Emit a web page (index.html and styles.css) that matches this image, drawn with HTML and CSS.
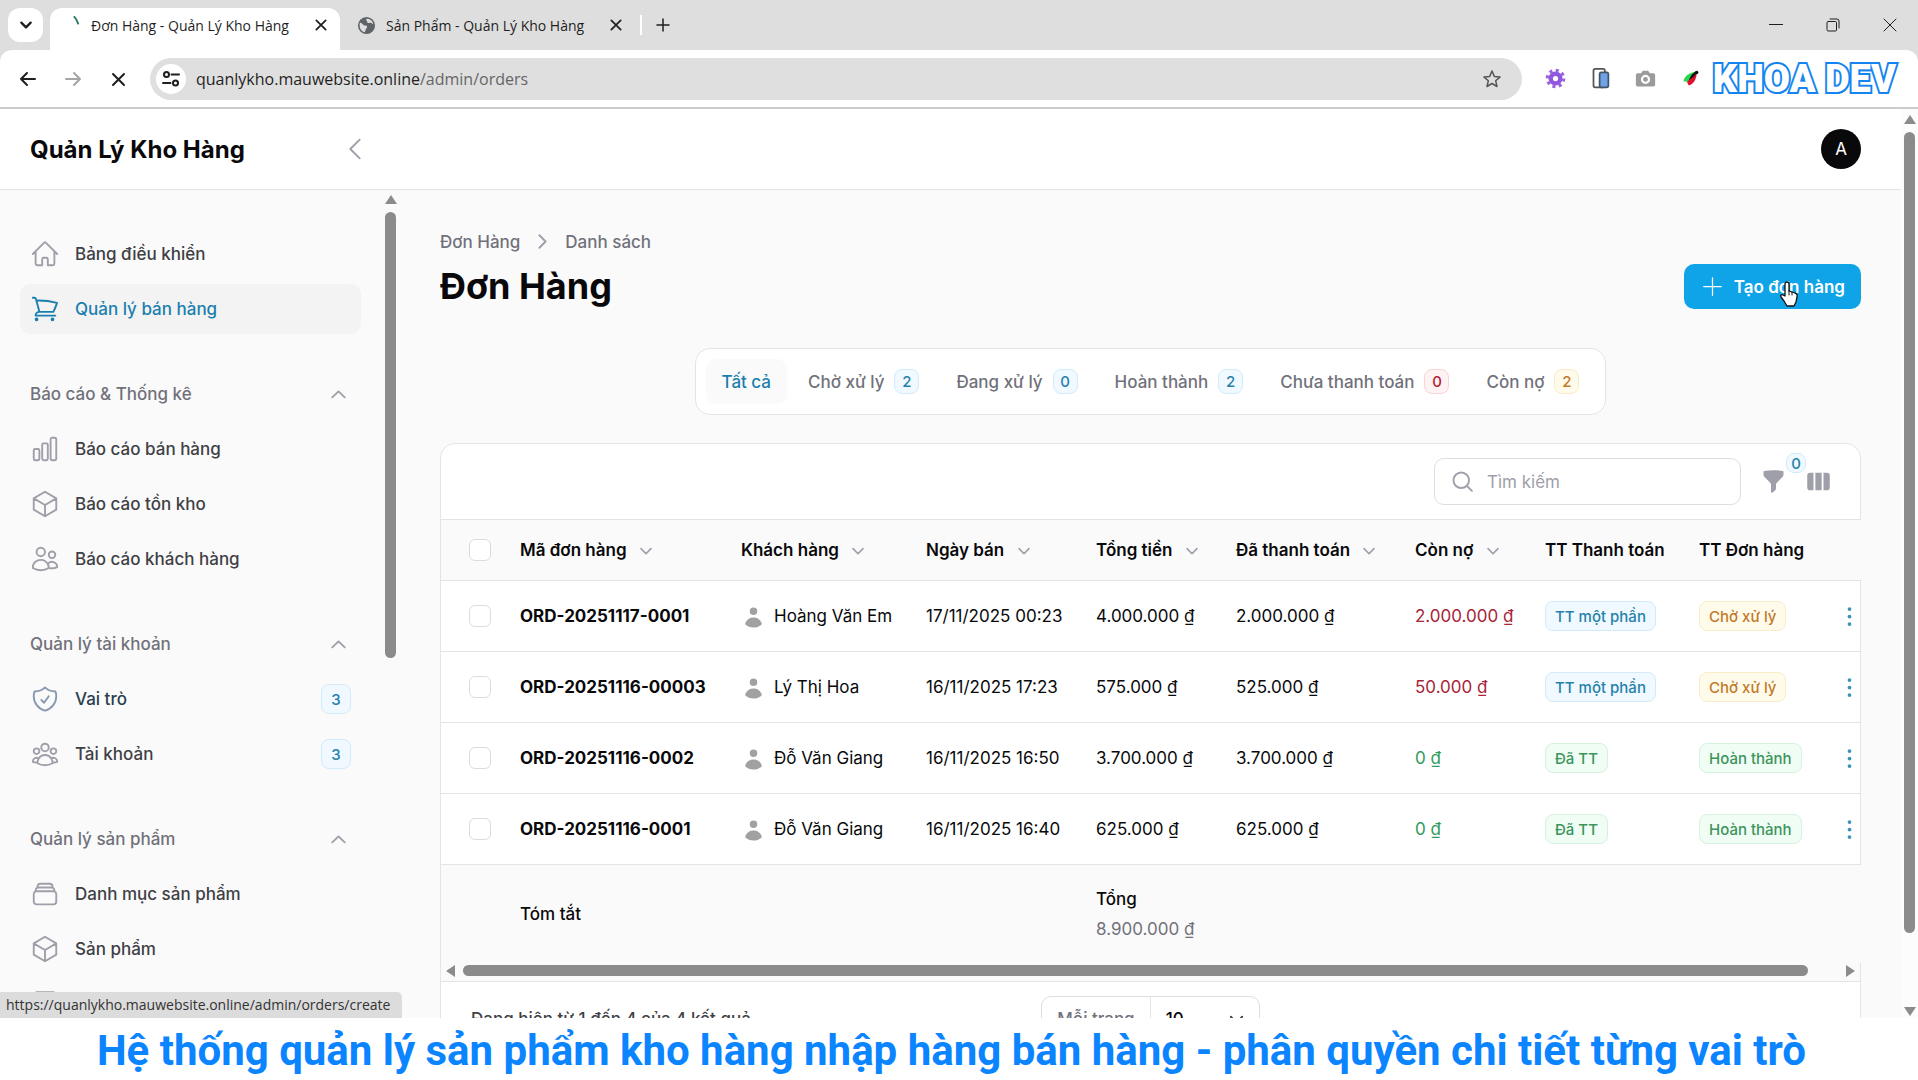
FILE: index.html
```html
<!DOCTYPE html>
<html lang="vi">
<head>
    <meta charset="UTF-8">
    <meta name="viewport" content="width=device-width, initial-scale=1.0">
    <title>Đơn Hàng - Quản Lý Kho Hàng</title>
    <link rel="stylesheet" href="styles.css">
</head>
<body>

    <!-- Shared icons -->
    <svg class="sprite" aria-hidden="true">
        <symbol id="i-down" viewBox="0 0 20 20"><path d="m5.5 7.8 4.5 4.7 4.5-4.7"/></symbol>
        <symbol id="i-up" viewBox="0 0 20 20"><path d="m5 12.3 5-4.8 5 4.8"/></symbol>
        <symbol id="i-close" viewBox="0 0 12 12"><path d="m2 2 8 8M10 2l-8 8"/></symbol>
        <symbol id="i-cube" viewBox="0 0 24 24"><path d="m21 7.5-9-5.25L3 7.5m18 0-9 5.25m9-5.25v9l-9 5.25M3 7.5l9 5.25M3 7.5v9l9 5.25m0-9v9"/></symbol>
        <symbol id="i-user" viewBox="0 0 20 20"><path d="M10 8a3 3 0 1 0 0-6 3 3 0 0 0 0 6ZM3.465 14.493a1.23 1.23 0 0 0 .41 1.412A9.957 9.957 0 0 0 10 18c2.31 0 4.438-.784 6.131-2.1.43-.333.604-.903.408-1.41a7.002 7.002 0 0 0-13.074.003Z"/></symbol>
        <symbol id="i-dots" viewBox="0 0 20 20"><circle cx="10" cy="4" r="1.5"/><circle cx="10" cy="10" r="1.5"/><circle cx="10" cy="16" r="1.5"/></symbol>
    </svg>

    <div class="browser">
        <div class="tab-strip">
            <button class="tab-search" aria-label="Tìm thẻ"><svg viewBox="0 0 12 12"><path d="m2 4 4 4 4-4"/></svg></button>
            <div class="tab active">
                <svg class="favicon" viewBox="0 0 20 20"><path d="M13 1c2 2 3 4 4 7" fill="none" stroke="#2c7a68" stroke-width="2"/></svg>
                <span>Đơn Hàng - Quản Lý Kho Hàng</span>
                <button class="tab-close" aria-label="Đóng thẻ"><svg><use href="#i-close"/></svg></button>
            </div>
            <div class="tab">
                <svg class="favicon" viewBox="0 0 20 20"><circle cx="10" cy="10" r="9" fill="#5f6368"/><path d="M3 7c3 0 3 3 6 3 2 0 2 2 1 3s-1 3-2 4c-4-1-6-5-5-10ZM10 3c-1 2 1 2 1 4 2 1 4-1 5 1 0 1 1 1 1 0-1-3-3-5-7-5Z" fill="#dedede"/></svg>
                <span>Sản Phẩm - Quản Lý Kho Hàng</span>
                <button class="tab-close" aria-label="Đóng thẻ"><svg><use href="#i-close"/></svg></button>
            </div>
            <button class="new-tab" aria-label="Thẻ mới"><svg viewBox="0 0 14 14"><path d="M7 1v12M1 7h12"/></svg></button>
            <div class="window-controls">
                <button aria-label="Thu nhỏ"><svg viewBox="0 0 14 14"><path d="M0 6.500h14"/></svg></button>
                <button aria-label="Khôi phục"><svg viewBox="0 0 14 14"><path d="M1 4.500a1 1 0 0 1 1-1h7.500a1 1 0 0 1 1 1V12a1 1 0 0 1-1 1H2a1 1 0 0 1-1-1ZM4 1h7a2 2 0 0 1 2 2v7"/></svg></button>
                <button aria-label="Đóng"><svg viewBox="0 0 14 14"><path d="m1 1 12 12M13 1 1 13"/></svg></button>
            </div>
        </div>

        <div class="toolbar">
            <button aria-label="Quay lại"><svg viewBox="0 0 18 18"><path d="M16 9H2m6-6L2 9l6 6"/></svg></button>
            <button class="disabled" aria-label="Tiến"><svg viewBox="0 0 18 18"><path d="M2 9h14M10 3l6 6-6 6"/></svg></button>
            <button aria-label="Dừng"><svg viewBox="0 0 18 18"><path d="m4 4 11 11M15 4 4 15"/></svg></button>
            <div class="omnibox">
                <button class="site-info" aria-label="Thông tin trang"><svg viewBox="0 0 18 18"><circle cx="4.500" cy="4.500" r="2.500"/><path d="M9.500 4.500H17M1 13h7.500"/><circle cx="13.500" cy="13" r="2.500"/></svg></button>
                <span class="url">quanlykho.mauwebsite.online<span>/admin/orders</span></span>
                <svg class="star" viewBox="0 0 20 20"><path d="m10 2 2.300 5.400 5.800.5-4.400 3.900 1.300 5.700-5-3-5 3 1.300-5.700-4.400-3.900 5.800-.5Z"/></svg>
            </div>
            <div class="extensions">
                <svg viewBox="0 0 24 24"><circle cx="12" cy="12" r="5.500" fill="none" stroke="#9058dc" stroke-width="5"/><circle cx="12" cy="12" r="9.200" fill="none" stroke="#9a63e0" stroke-width="4" stroke-dasharray="3.400 3.825"/></svg>
                <svg viewBox="0 0 24 24"><rect x="4" y="1" width="13" height="21" rx="2" fill="#fff" stroke="#555"/><rect x="11" y="5" width="10" height="17" rx="2" fill="#6ea3e8" stroke="#456"/></svg>
                <svg viewBox="0 0 24 24"><path d="M3 6h4l2-3h6l2 3h4a2 2 0 0 1 2 2v11a2 2 0 0 1-2 2H3a2 2 0 0 1-2-2V8a2 2 0 0 1 2-2Z" fill="#9b9b9b"/><circle cx="12" cy="13" r="4" fill="none" stroke="#fff" stroke-width="2.500"/></svg>
                <svg viewBox="0 0 24 24"><path d="M4 15C5 9 11 5 19 4l-9 12Z" fill="#2bd84a"/><path d="M19 5 8 16l2 4c6-2 9-8 9-15Z" fill="#e01030"/><path d="M10 14C12 9 15 5 19 4c1 2-3 6-9 10Z" fill="#111"/><circle cx="19" cy="5" r="2" fill="#111"/></svg>
            </div>
            <div class="channel">KHOA DEV</div>
        </div>
    </div>

    <div class="viewport">
        <div class="page">
            <header class="topbar">
                <a class="brand" href="#">Quản Lý Kho Hàng</a>
                <button class="collapse" aria-label="Thu gọn"><svg viewBox="0 0 24 24"><path d="M15.750 19.500 8.250 12l7.500-7.500"/></svg></button>
                <button class="avatar">A</button>
            </header>

            <div class="layout">
                <aside class="sidebar">
                    <nav>
                        <div class="nav-group">
                            <a class="nav-item" href="#"><svg viewBox="0 0 24 24"><path d="m2.250 12 8.954-8.955c.44-.439 1.152-.439 1.591 0L21.750 12M4.500 9.750v10.125c0 .621.504 1.125 1.125 1.125H9.750v-4.875c0-.621.504-1.125 1.125-1.125h2.250c.621 0 1.125.504 1.125 1.125V21h4.125c.621 0 1.125-.504 1.125-1.125V9.750"/></svg><span>Bảng điều khiển</span></a>
                            <a class="nav-item active" href="#"><svg viewBox="0 0 24 24"><path d="M2.250 3h1.386c.51 0 .955.343 1.087.835l.383 1.437M7.500 14.250a3 3 0 0 0-3 3h15.750m-12.750-3h11.218c1.121-2.300 2.100-4.684 2.924-7.138a60.114 60.114 0 0 0-16.536-1.840M7.500 14.250 5.106 5.272M6 20.250a.75.75 0 1 1-1.500 0 .75.75 0 0 1 1.500 0Zm12.750 0a.75.75 0 1 1-1.500 0 .75.75 0 0 1 1.500 0Z"/></svg><span>Quản lý bán hàng</span></a>
                        </div>
                        <div class="nav-group">
                            <button class="nav-heading">Báo cáo &amp; Thống kê<svg><use href="#i-up"/></svg></button>
                            <a class="nav-item" href="#"><svg viewBox="0 0 24 24"><path d="M3 13.125C3 12.504 3.504 12 4.125 12h2.250c.621 0 1.125.504 1.125 1.125v6.750C7.500 20.496 6.996 21 6.375 21h-2.250A1.125 1.125 0 0 1 3 19.875v-6.750ZM9.750 8.625c0-.621.504-1.125 1.125-1.125h2.250c.621 0 1.125.504 1.125 1.125v11.250c0 .621-.504 1.125-1.125 1.125h-2.250a1.125 1.125 0 0 1-1.125-1.125V8.625ZM16.500 4.125c0-.621.504-1.125 1.125-1.125h2.250C20.496 3 21 3.504 21 4.125v15.750c0 .621-.504 1.125-1.125 1.125h-2.250a1.125 1.125 0 0 1-1.125-1.125V4.125Z"/></svg><span>Báo cáo bán hàng</span></a>
                            <a class="nav-item" href="#"><svg><use href="#i-cube"/></svg><span>Báo cáo tồn kho</span></a>
                            <a class="nav-item" href="#"><svg viewBox="0 0 24 24"><path d="M15 19.128a9.380 9.380 0 0 0 2.625.372 9.337 9.337 0 0 0 4.121-.952 4.125 4.125 0 0 0-7.533-2.493M15 19.128v-.003c0-1.113-.285-2.160-.786-3.070M15 19.128v.106A12.318 12.318 0 0 1 8.624 21c-2.331 0-4.512-.645-6.374-1.766l-.001-.109a6.375 6.375 0 0 1 11.964-3.070M12 6.375a3.375 3.375 0 1 1-6.750 0 3.375 3.375 0 0 1 6.750 0Zm8.250 2.250a2.625 2.625 0 1 1-5.250 0 2.625 2.625 0 0 1 5.250 0Z"/></svg><span>Báo cáo khách hàng</span></a>
                        </div>
                        <div class="nav-group">
                            <button class="nav-heading">Quản lý tài khoản<svg><use href="#i-up"/></svg></button>
                            <a class="nav-item hover" href="#"><svg viewBox="0 0 24 24"><path d="M9 12.750 11.250 15 15 9.750m-3-7.036A11.959 11.959 0 0 1 3.598 6 11.990 11.990 0 0 0 3 9.749c0 5.592 3.824 10.290 9 11.623 5.176-1.332 9-6.030 9-11.622 0-1.310-.210-2.571-.598-3.751h-.152c-3.196 0-6.100-1.248-8.250-3.285Z"/></svg><span>Vai trò</span><b class="badge info">3</b></a>
                            <a class="nav-item" href="#"><svg viewBox="0 0 24 24"><path d="M18 18.720a9.094 9.094 0 0 0 3.741-.479 3 3 0 0 0-4.682-2.720m.94 3.198.001.031c0 .225-.012.447-.037.666A11.944 11.944 0 0 1 12 21c-2.170 0-4.207-.576-5.963-1.584A6.062 6.062 0 0 1 6 18.719m12 0a5.971 5.971 0 0 0-.941-3.197m0 0A5.995 5.995 0 0 0 12 12.750a5.995 5.995 0 0 0-5.058 2.772m0 0a3 3 0 0 0-4.681 2.720 8.986 8.986 0 0 0 3.740.477m.94-3.197a5.971 5.971 0 0 0-.94 3.197M15 6.750a3 3 0 1 1-6 0 3 3 0 0 1 6 0Zm6 3a2.250 2.250 0 1 1-4.500 0 2.250 2.250 0 0 1 4.500 0Zm-13.500 0a2.250 2.250 0 1 1-4.500 0 2.250 2.250 0 0 1 4.500 0Z"/></svg><span>Tài khoản</span><b class="badge info">3</b></a>
                        </div>
                        <div class="nav-group">
                            <button class="nav-heading">Quản lý sản phẩm<svg><use href="#i-up"/></svg></button>
                            <a class="nav-item" href="#"><svg viewBox="0 0 24 24"><path d="M6 6.878V6a2.250 2.250 0 0 1 2.250-2.250h7.500A2.250 2.250 0 0 1 18 6v.878m-12 0c.235-.083.487-.128.750-.128h10.500c.263 0 .515.045.750.128m-12 0A2.250 2.250 0 0 0 4.500 9v.878m13.500-3A2.250 2.250 0 0 1 19.500 9v.878m0 0a2.246 2.246 0 0 0-.750-.128H5.250c-.263 0-.515.045-.750.128m15 0A2.250 2.250 0 0 1 21 12v6a2.250 2.250 0 0 1-2.250 2.250H5.250A2.250 2.250 0 0 1 3 18v-6c0-.980.626-1.813 1.500-2.122"/></svg><span>Danh mục sản phẩm</span></a>
                            <a class="nav-item" href="#"><svg><use href="#i-cube"/></svg><span>Sản phẩm</span></a>
                            <a class="nav-item" href="#"><svg viewBox="0 0 24 24"><path d="M5 2.500h14v19H5Z"/></svg></a>
                        </div>
                    </nav>
                    <div class="scrollbar side"><i class="arrow-up"></i><i class="thumb"></i></div>
                </aside>

                <main>
                    <div class="breadcrumb">
                        <a href="#">Đơn Hàng</a>
                        <svg viewBox="0 0 20 20"><path d="m7.500 5 5 5-5 5"/></svg>
                        <a href="#">Danh sách</a>
                    </div>
                    <div class="page-head">
                        <h1>Đơn Hàng</h1>
                        <button class="create">
                            <svg viewBox="0 0 20 20"><path d="M10 3v14M3 10h14"/></svg>
                            Tạo đơn hàng
                            <svg class="pointer" viewBox="0 0 20 26"><path d="M6 15V3a2 2 0 0 1 4 0v7l6 2c2 .5 2.500 2 2 4l-1 5-2 4H8l-3-5-3-4c-1-2 1-3 2-2Z" fill="#fff" stroke="#111" stroke-width="1.300"/><path d="M10 10v4M13 11v3" fill="none" stroke="#111"/></svg>
                        </button>
                    </div>

                    <div class="tabs">
                        <button class="active">Tất cả</button>
                        <button>Chờ xử lý <b class="badge info">2</b></button>
                        <button>Đang xử lý <b class="badge info">0</b></button>
                        <button>Hoàn thành <b class="badge info">2</b></button>
                        <button>Chưa thanh toán <b class="badge danger">0</b></button>
                        <button>Còn nợ <b class="badge warning">2</b></button>
                    </div>

                    <div class="card">
                        <div class="card-tools">
                            <label class="search">
                                <svg viewBox="0 0 20 20"><circle cx="9" cy="9" r="6.200"/><path d="m13.500 13.500 4 4"/></svg>
                                <input type="search" placeholder="Tìm kiếm" aria-label="Tìm kiếm">
                            </label>
                            <button class="tool" aria-label="Bộ lọc">
                                <svg viewBox="0 0 20 20"><path d="M2.628 1.601C5.028 1.206 7.490 1 10 1s4.973.206 7.372.601a.75.75 0 0 1 .628.740v2.288a2.250 2.250 0 0 1-.659 1.590l-4.682 4.683a2.250 2.250 0 0 0-.659 1.590v3.037c0 .684-.310 1.330-.844 1.757l-1.937 1.550A.75.75 0 0 1 8 18.250v-5.757a2.250 2.250 0 0 0-.659-1.591L2.659 6.220A2.250 2.250 0 0 1 2 4.629V2.340a.75.75 0 0 1 .628-.740Z"/></svg>
                                <b class="badge info">0</b>
                            </button>
                            <button class="tool" aria-label="Cột"><svg viewBox="0 0 20 20"><path d="M14 17h2.750A2.250 2.250 0 0 0 19 14.750v-9.500A2.250 2.250 0 0 0 16.750 3H14v14ZM12.500 3h-5v14h5V3ZM3.250 3H6v14H3.250A2.250 2.250 0 0 1 1 14.750v-9.500A2.250 2.250 0 0 1 3.250 3Z"/></svg></button>
                        </div>

                        <table>
                            <colgroup>
                                <col class="c-check"><col class="c-code"><col class="c-customer"><col class="c-date"><col class="c-total"><col class="c-paid"><col class="c-debt"><col class="c-pay"><col class="c-status"><col class="c-menu">
                            </colgroup>
                            <thead>
                                <tr>
                                    <th><input type="checkbox" aria-label="Chọn tất cả"></th>
                                    <th>Mã đơn hàng <svg><use href="#i-down"/></svg></th>
                                    <th>Khách hàng <svg><use href="#i-down"/></svg></th>
                                    <th>Ngày bán <svg><use href="#i-down"/></svg></th>
                                    <th>Tổng tiền <svg><use href="#i-down"/></svg></th>
                                    <th>Đã thanh toán <svg><use href="#i-down"/></svg></th>
                                    <th>Còn nợ <svg><use href="#i-down"/></svg></th>
                                    <th>TT Thanh toán</th>
                                    <th>TT Đơn hàng</th>
                                    <th></th>
                                </tr>
                            </thead>
                            <tbody>
                                <tr>
                                    <td><input type="checkbox" aria-label="Chọn ORD-20251117-0001"></td>
                                    <td class="code">ORD-20251117-0001</td>
                                    <td><svg class="user"><use href="#i-user"/></svg>Hoàng Văn Em</td>
                                    <td>17/11/2025 00:23</td>
                                    <td>4.000.000 ₫</td>
                                    <td>2.000.000 ₫</td>
                                    <td class="debt">2.000.000 ₫</td>
                                    <td><span class="badge info">TT một phần</span></td>
                                    <td><span class="badge warning">Chờ xử lý</span></td>
                                    <td><button class="menu" aria-label="Thao tác"><svg><use href="#i-dots"/></svg></button></td>
                                </tr>
                                <tr>
                                    <td><input type="checkbox" aria-label="Chọn ORD-20251116-00003"></td>
                                    <td class="code">ORD-20251116-00003</td>
                                    <td><svg class="user"><use href="#i-user"/></svg>Lý Thị Hoa</td>
                                    <td>16/11/2025 17:23</td>
                                    <td>575.000 ₫</td>
                                    <td>525.000 ₫</td>
                                    <td class="debt">50.000 ₫</td>
                                    <td><span class="badge info">TT một phần</span></td>
                                    <td><span class="badge warning">Chờ xử lý</span></td>
                                    <td><button class="menu" aria-label="Thao tác"><svg><use href="#i-dots"/></svg></button></td>
                                </tr>
                                <tr>
                                    <td><input type="checkbox" aria-label="Chọn ORD-20251116-0002"></td>
                                    <td class="code">ORD-20251116-0002</td>
                                    <td><svg class="user"><use href="#i-user"/></svg>Đỗ Văn Giang</td>
                                    <td>16/11/2025 16:50</td>
                                    <td>3.700.000 ₫</td>
                                    <td>3.700.000 ₫</td>
                                    <td class="paid">0 ₫</td>
                                    <td><span class="badge success">Đã TT</span></td>
                                    <td><span class="badge success">Hoàn thành</span></td>
                                    <td><button class="menu" aria-label="Thao tác"><svg><use href="#i-dots"/></svg></button></td>
                                </tr>
                                <tr>
                                    <td><input type="checkbox" aria-label="Chọn ORD-20251116-0001"></td>
                                    <td class="code">ORD-20251116-0001</td>
                                    <td><svg class="user"><use href="#i-user"/></svg>Đỗ Văn Giang</td>
                                    <td>16/11/2025 16:40</td>
                                    <td>625.000 ₫</td>
                                    <td>625.000 ₫</td>
                                    <td class="paid">0 ₫</td>
                                    <td><span class="badge success">Đã TT</span></td>
                                    <td><span class="badge success">Hoàn thành</span></td>
                                    <td><button class="menu" aria-label="Thao tác"><svg><use href="#i-dots"/></svg></button></td>
                                </tr>
                            </tbody>
                            <tfoot>
                                <tr>
                                    <td></td>
                                    <td colspan="3" class="summary">Tóm tắt</td>
                                    <td colspan="6"><span class="summary">Tổng</span><br><span class="sum">8.900.000 ₫</span></td>
                                </tr>
                            </tfoot>
                        </table>
                        <div class="scrollbar bottom"><i class="arrow-left"></i><i class="thumb"></i><i class="arrow-right"></i></div>

                        <div class="pagination">
                            <span>Đang hiện từ 1 đến 4 của 4 kết quả</span>
                            <div class="per-page">
                                <label for="perPage">Mỗi trang</label>
                                <select id="perPage"><option>10</option></select>
                                <svg><use href="#i-down"/></svg>
                            </div>
                            <span></span>
                        </div>
                    </div>
                </main>
            </div>
        </div>
        <div class="scrollbar page-scroll"><i class="arrow-up"></i><i class="thumb"></i><i class="arrow-down"></i></div>
        <div class="status-url">https://quanlykho.mauwebsite.online/admin/orders/create</div>
    </div>

    <div class="caption">Hệ thống quản lý sản phẩm kho hàng nhập hàng bán hàng - phân quyền chi tiết từng vai trò</div>

</body>
</html>
```
FILE: styles.css
```css
* {
    box-sizing: border-box;
}
body {
    margin: 0;
    height: 100vh;
    display: flex;
    flex-direction: column;
    overflow: hidden;
    font-family: Inter, sans-serif;
    font-size: 17px;
    color: #09090b;
    background-color: #fff;
}
button {
    padding: 0;
    border: none;
    background: none;
    font: inherit;
    color: inherit;
    cursor: pointer;
}
a {
    color: inherit;
    text-decoration: none;
}
svg {
    flex: none;
    fill: none;
    stroke: currentColor;
    stroke-width: 1.5;
    stroke-linecap: round;
    stroke-linejoin: round;
}
.sprite {
    display: none;
}

/* Browser window */
.browser {
    background-color: #dedede;
    border-bottom: 2px solid #cbcbcb;
    font-family: "Open Sans", sans-serif;
    color: #1f1f1f;
}
.tab-strip {
    display: flex;
    align-items: center;
    height: 50px;
    padding-left: 8px;
}
.tab-strip svg {
    width: 14px;
    height: 14px;
}
.tab-search {
    width: 35px;
    height: 34px;
    margin-right: 7px;
    border-radius: 12px;
    background-color: #fff;
}
.tab-search svg {
    stroke-width: 2;
}
.tab {
    display: flex;
    align-items: center;
    align-self: flex-end;
    gap: 10px;
    width: 300px;
    height: 42px;
    padding: 0 17px 8px;
    font-size: 14px;
    white-space: nowrap;
    border-radius: 12px 12px 0 0;
}
.tab.active {
    width: 290px;
    padding: 0 12px 8px;
    background-color: #fff;
}
.tab .favicon {
    width: 19px;
    height: 19px;
    stroke: none;
}
.tab-close {
    display: flex;
    margin-left: auto;
}
.new-tab {
    display: flex;
    align-items: center;
    height: 20px;
    padding-left: 14px;
    border-left: 2px solid #fff;
}
.window-controls {
    display: flex;
    margin-left: auto;
}
.window-controls button {
    width: 57px;
}
.window-controls svg {
    stroke-width: 1;
}
.toolbar {
    display: flex;
    align-items: center;
    height: 57px;
    padding: 0 22px 0 5px;
    background-color: #fff;
    border-radius: 12px 12px 0 0;
}
.toolbar > button {
    display: flex;
    justify-content: center;
    width: 45px;
}
.toolbar svg {
    width: 18px;
    height: 18px;
    stroke-width: 2;
}
.disabled {
    color: #a5a5a5;
}
.omnibox {
    flex: 1;
    display: flex;
    align-items: center;
    gap: 10px;
    height: 42px;
    margin-left: 10px;
    padding: 0 20px 0 6px;
    border-radius: 21px;
    background-color: #dfdfdf;
    font-size: 16px;
}
.site-info {
    display: flex;
    align-items: center;
    justify-content: center;
    width: 30px;
    height: 30px;
    border-radius: 50%;
    background-color: #fff;
}
.omnibox .url {
    flex: 1;
}
.url span {
    color: #666;
}
.toolbar .star {
    width: 20px;
    height: 20px;
    color: #555;
    stroke-width: 1.5;
}
.extensions {
    display: flex;
    gap: 24px;
    margin: 0 12px 0 23px;
}
.extensions svg {
    width: 21px;
    height: 21px;
    stroke: none;
    stroke-linecap: butt;
}
.channel {
    font-family: Roboto, sans-serif;
    font-size: 38px;
    font-weight: 900;
    line-height: 40px;
    color: #fff;
    white-space: nowrap;
    -webkit-text-stroke: 4px #1584f0;
    paint-order: stroke fill;
    text-shadow: 1px 2px 0 #1584f0;
}

/* Page area */
.viewport {
    position: relative;
    flex: 1;
    display: flex;
    min-height: 0;
    overflow: hidden;
    background-color: #fafafa;
}
.page {
    flex: 1;
    min-width: 0;
}
.topbar {
    display: flex;
    align-items: center;
    height: 81px;
    padding: 0 40px 0 30px;
    background-color: #fff;
    border-bottom: 1px solid #e4e4e7;
}
.brand {
    width: 310px;
    font-size: 24px;
    font-weight: 700;
}
.collapse {
    color: #9f9fa9;
    display: flex;
}
.collapse svg {
    width: 30px;
    height: 30px;
}
.avatar {
    width: 40px;
    height: 40px;
    margin-left: auto;
    border-radius: 50%;
    background-color: #09090b;
    color: #fff;
}
.layout {
    display: flex;
}

/* Scrollbars */
.scrollbar {
    display: flex;
    flex-direction: column;
    align-items: center;
    gap: 8px;
}
.scrollbar .thumb {
    width: 11px;
    border-radius: 6px;
    background-color: #8b8b8b;
}
.scrollbar.side {
    width: 19px;
    padding-top: 5px;
}
.side .thumb {
    height: 446px;
}
.scrollbar.page-scroll {
    width: 17px;
    padding: 6px 0 2px;
    background-color: #fcfcfc;
}
.page-scroll .thumb {
    height: 801px;
}
.scrollbar.bottom {
    flex-direction: row;
    height: 18px;
    padding: 0 5px 2px;
    background-color: #fafafa;
}
.bottom .thumb {
    flex: 1;
    height: 11px;
    margin-right: 30px;
}
.arrow-up, .arrow-down {
    border: 6px solid transparent;
}
.arrow-up {
    border-top: none;
    border-bottom: 9px solid #8b8b8b;
}
.arrow-down {
    margin-top: auto;
    border-bottom: none;
    border-top: 9px solid #8b8b8b;
}
.arrow-left, .arrow-right {
    border: 6px solid transparent;
}
.arrow-left {
    border-left: none;
    border-right: 9px solid #8b8b8b;
}
.arrow-right {
    border-right: none;
    border-left: 9px solid #8b8b8b;
}

/* Sidebar */
.sidebar {
    display: flex;
    width: 400px;
    flex: none;
}
nav {
    flex: 1;
    display: flex;
    flex-direction: column;
    gap: 35px;
    padding: 39px 20px 0;
}
.nav-group {
    display: flex;
    flex-direction: column;
    gap: 5px;
}
.nav-item, .nav-heading {
    display: flex;
    align-items: center;
    height: 50px;
    padding: 0 10px;
    border-radius: 10px;
    font-size: 17px;
    font-weight: 500;
}
.nav-item {
    gap: 15px;
    color: #3f3f46;
}
.nav-item svg {
    width: 30px;
    height: 30px;
    color: #9f9fa9;
}
.nav-item .badge {
    margin-left: auto;
    min-width: 30px;
}
.nav-item.active {
    background-color: #f3f3f4;
}
.nav-item.active, .nav-item.active svg {
    color: #1b7fae;
}
.nav-item.hover {
    color: #2c3e50;
}
.nav-item.hover svg {
    color: #8799b0;
}
.nav-heading {
    justify-content: space-between;
    color: #71717b;
}
.nav-heading svg {
    width: 25px;
    height: 25px;
    color: #9f9fa9;
}

/* Badges */
.badge {
    display: inline-flex;
    align-items: center;
    justify-content: center;
    height: 30px;
    padding: 0 9px;
    border: 1px solid;
    border-radius: 8px;
    font-size: 15px;
    font-weight: 500;
}
.info {
    color: #2581aa;
    background-color: #f0f9ff;
    border-color: #d3ebf8;
}
.warning {
    color: #c27a28;
    background-color: #fffbeb;
    border-color: #fbecc8;
}
.danger {
    color: #b3223a;
    background-color: #fef2f2;
    border-color: #f8d4d8;
}
.success {
    color: #3b945c;
    background-color: #f0fdf4;
    border-color: #d6f2df;
}

/* Main content */
main {
    flex: 1;
    min-width: 0;
    padding: 39px 40px 0;
}
.breadcrumb {
    display: flex;
    align-items: center;
    gap: 10px;
    height: 25px;
    font-weight: 500;
    color: #71717b;
}
.breadcrumb svg {
    width: 25px;
    height: 25px;
    color: #9f9fa9;
}
.page-head {
    display: flex;
    align-items: center;
    justify-content: space-between;
    height: 45px;
    margin-top: 10px;
}
h1 {
    margin: 0;
    font-size: 36px;
    line-height: 45px;
    font-weight: 700;
}
.create {
    position: relative;
    display: flex;
    align-items: center;
    gap: 9px;
    height: 45px;
    padding: 0 16px;
    border-radius: 10px;
    background-color: #0fa4e8;
    color: #fff;
    font-weight: 600;
}
.create svg {
    width: 25px;
    height: 25px;
    stroke-width: 1;
}
.create .pointer {
    position: absolute;
    left: 95px;
    top: 17px;
    width: 20px;
    height: 26px;
}
.tabs {
    display: flex;
    gap: 5px;
    width: fit-content;
    margin: 39px auto 28px;
    padding: 10px;
    border: 1px solid #e4e4e7;
    border-radius: 15px;
    background-color: #fff;
}
.tabs button {
    display: flex;
    align-items: center;
    gap: 10px;
    height: 45px;
    padding: 0 16px;
    border-radius: 10px;
    font-weight: 500;
    color: #71717b;
}
.tabs .active {
    background-color: #fafafa;
    color: #1b7fae;
}
.tabs .badge {
    width: 25px;
    height: 25px;
    padding: 0;
}

/* Orders table */
.card {
    border: 1px solid #e4e4e7;
    border-radius: 15px;
    background-color: #fff;
}
.card-tools {
    display: flex;
    align-items: center;
    justify-content: flex-end;
    gap: 20px;
    height: 75px;
    padding: 0 29px;
}
.search {
    display: flex;
    align-items: center;
    gap: 10px;
    width: 307px;
    height: 47px;
    padding: 0 15px;
    border: 1px solid #dedee1;
    border-radius: 10px;
    color: #9f9fa9;
}
.search svg {
    width: 25px;
    height: 25px;
}
.search input {
    min-width: 0;
    border: none;
    outline: none;
    background: none;
    font: inherit;
}
.search input::placeholder {
    color: #9f9fa9;
}
.tool {
    position: relative;
    display: flex;
    color: #9f9fa9;
}
.tool svg {
    width: 25px;
    height: 25px;
    fill: currentColor;
    stroke: none;
}
.tool .badge {
    position: absolute;
    left: 25px;
    top: -16px;
    width: 20px;
    height: 20px;
    padding: 0;
}
table {
    width: 100%;
    table-layout: fixed;
    border-collapse: collapse;
}
.c-check { width: 64px; }
.c-code { width: 221px; }
.c-customer { width: 185px; }
.c-date { width: 170px; }
.c-total { width: 140px; }
.c-paid { width: 179px; }
.c-debt { width: 130px; }
.c-pay { width: 154px; }
.c-status { width: 143px; }
.c-menu { width: 34px; }
th, td {
    padding: 0 15px;
    text-align: left;
    white-space: nowrap;
    border-top: 1px solid #e4e4e7;
}
th {
    height: 61px;
    font-weight: 600;
    background-color: #fafafa;
}
th svg {
    width: 22px;
    height: 22px;
    margin: -5px 0 -5px 4px;
    vertical-align: middle;
    color: #9f9fa9;
}
td {
    height: 71px;
}
td:first-child, th:first-child {
    padding-left: 28px;
}
td:last-child:not([colspan]) {
    padding: 0 0 0 10px;
}
input[type="checkbox"] {
    display: block;
    appearance: none;
    width: 22px;
    height: 22px;
    margin: 0;
    border: 1px solid #dcdcdf;
    border-radius: 6px;
    background-color: #fff;
}
.code {
    font-weight: 700;
}
.user {
    width: 25px;
    height: 25px;
    margin: -5px 8px -5px 0;
    vertical-align: middle;
    fill: #a1a1a1;
    stroke: none;
}
.debt {
    color: #a82438;
}
.paid {
    color: #2f9a5a;
}
.menu {
    display: flex;
    color: #3b93ba;
}
.menu svg {
    width: 25px;
    height: 25px;
    fill: currentColor;
    stroke: none;
}
tfoot td {
    height: 98px;
    line-height: 30px;
    background-color: #fafafa;
}
.summary {
    font-weight: 500;
}
.sum {
    color: #71717b;
}
.pagination {
    display: grid;
    grid-template-columns: 1fr auto 1fr;
    align-items: center;
    padding: 14px 30px;
    border-top: 1px solid #e4e4e7;
    font-weight: 500;
    color: #3f3f46;
}
.per-page {
    display: flex;
    align-items: center;
    height: 47px;
    border: 1px solid #dedee1;
    border-radius: 10px;
}
.per-page label {
    padding: 0 15px;
    color: #71717b;
    line-height: 45px;
    border-right: 1px solid #e4e4e7;
}
.per-page select {
    appearance: none;
    width: 73px;
    padding: 0 15px;
    border: none;
    background: none;
    font: inherit;
    color: #09090b;
}
.per-page svg {
    width: 25px;
    height: 25px;
    margin-right: 10px;
}

/* Link preview over the page */
.status-url {
    position: absolute;
    left: 0;
    bottom: 0;
    padding: 0 12px 0 6px;
    border-radius: 0 5px 0 0;
    background-color: #dcdcdc;
    font-family: "Open Sans", sans-serif;
    font-size: 14px;
    line-height: 26px;
    color: #333;
}

.caption {
    height: 62px;
    padding-right: 15px;
    text-align: center;
    white-space: nowrap;
    font-family: Roboto, sans-serif;
    font-size: 42px;
    font-weight: 700;
    line-height: 66px;
    color: #0a84ff;
    background-color: #fff;
}
```
